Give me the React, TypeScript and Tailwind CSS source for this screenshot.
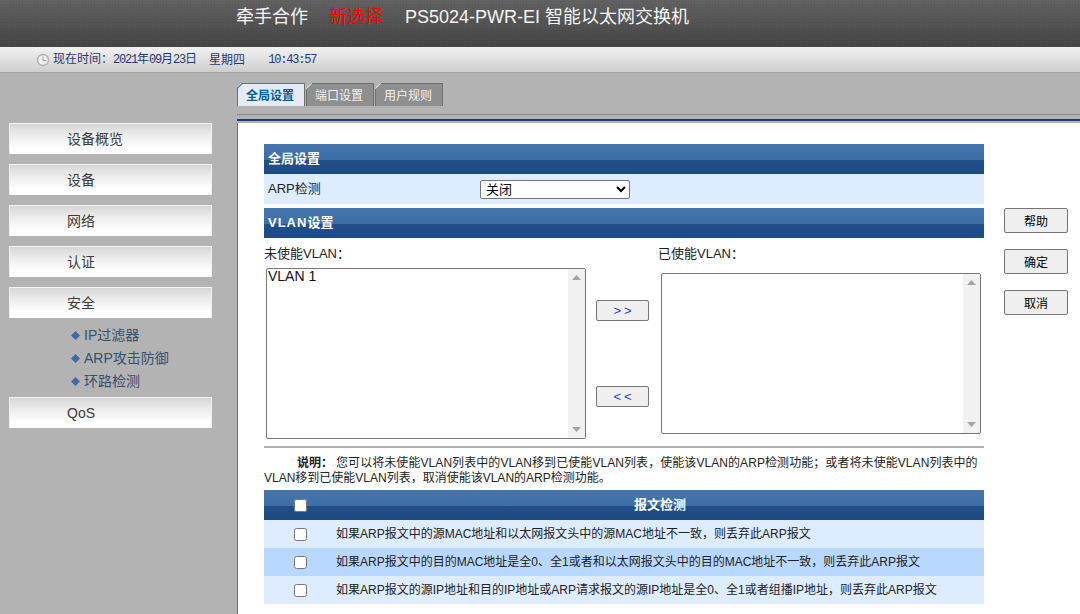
const font = "font-['Liberation_Sans','Noto_Sans_CJK_SC',sans-serif]";

const navItems = ["设备概览", "设备", "网络", "认证", "安全"];
const subItems = ["IP过滤器", "ARP攻击防御", "环路检测"];
const tabs = ["全局设置", "端口设置", "用户规则"];

const rules = [
  "如果ARP报文中的源MAC地址和以太网报文头中的源MAC地址不一致，则丢弃此ARP报文",
  "如果ARP报文中的目的MAC地址是全0、全1或者和以太网报文头中的目的MAC地址不一致，则丢弃此ARP报文",
  "如果ARP报文的源IP地址和目的IP地址或ARP请求报文的源IP地址是全0、全1或者组播IP地址，则丢弃此ARP报文",
];

const barBg = "bg-[linear-gradient(to_bottom,#4576ae_0%,#3d6ea5_52%,#215089_53%,#1d4a83_100%)]";

const NavButton = ({ label }: { label: string }) => (
  <div className="relative h-[31px] w-[203px] border-x border-t border-x-[#efefef] border-t-[#f4f4f4] bg-[linear-gradient(to_bottom,#d6d6d6_0%,#ebebeb_35%,#ffffff_80%)] pl-[57px] text-[14px] leading-[30px] text-[#3a3a3a]">
    {label}
  </div>
);

const ListBox = ({ className, items }: { className: string; items: string[] }) => (
  <div className={`flex rounded-[2px] border border-[#767676] bg-white ${className}`}>
    <div className="flex-1 pl-[1px] text-[14px] leading-[15px] text-[#111]">
      {items.map((item) => (
        <div key={item}>{item}</div>
      ))}
    </div>
    <div className="flex w-[17px] flex-col items-center justify-between bg-[#f1f1f1] py-[6px]">
      <svg width="9" height="5" viewBox="0 0 9 5"><path d="M4.5 0 9 5H0z" fill="#a3a3a3" /></svg>
      <svg width="9" height="5" viewBox="0 0 9 5"><path d="M0 0h9L4.5 5z" fill="#a3a3a3" /></svg>
    </div>
  </div>
);

const SmallButton = ({ label, className }: { label: string; className: string }) => (
  <button className={`rounded-[2px] border border-[#767676] bg-[#efefef] text-center text-[12px] ${className}`}>
    {label}
  </button>
);

// digits in the time bar are narrower than the body font
const Num = ({ children }: { children: string }) => (
  <span className="font-['Liberation_Mono',monospace] text-[12px] tracking-[-1.2px]">{children}</span>
);

export default function App() {
  return (
    <div className={`flex h-[614px] w-[1080px] flex-col overflow-hidden bg-[#b3b3b3] ${font}`}>
      {/* top title */}
      <div className="flex h-[47px] items-start bg-[radial-gradient(rgba(0,0,0,0.07)_1px,transparent_1px),linear-gradient(to_bottom,#626262,#444444)] bg-[size:3px_3px,100%_100%] pl-[236px] pt-[6px] text-[18px] leading-[22px] text-[#f5f5f5]">
        <span>牵手合作</span>
        <span className="ml-[21px] text-[#ff0000]">新选择</span>
        <span className="ml-[22px]">PS5024-PWR-EI 智能以太网交换机</span>
      </div>

      {/* time bar */}
      <div className="flex h-[26px] items-center border-b border-b-[#a6a6a6] bg-[linear-gradient(to_bottom,#f2f2f2,#cecece)] pl-[36px] text-[12px] text-[#1f3a70]">
        <svg width="14" height="14" viewBox="0 0 14 14" className="mr-[3px]" fill="none">
          <circle cx="7" cy="7" r="5.5" fill="#eeeeee" stroke="#b0b0b0" strokeWidth="1.4" />
          <path d="M7 3.5V7.5H10.5" stroke="#a0a0a0" strokeWidth="1" />
        </svg>
        <span>
          现在时间：<Num>2021</Num>年<Num>09</Num>月<Num>23</Num>日
        </span>
        <span className="ml-[12px]">星期四</span>
        <span className="ml-[23px]"><Num>10:43:57</Num></span>
      </div>

      <div className="flex flex-1">
        {/* sidebar */}
        <aside className="w-[237px] shrink-0 pl-[9px] pt-[50px]">
          <div className="flex flex-col gap-[10px]">
            {navItems.map((item) => (
              <NavButton key={item} label={item} />
            ))}
          </div>
          <ul className="flex flex-col pb-[4px] pl-[62px] pt-[6px] text-[14px] leading-[23px] text-[#35506f]">
            {subItems.map((item) => (
              <li key={item} className="flex items-center gap-[4px]">
                <svg width="9" height="9" viewBox="0 0 9 9"><path d="M4.5 0 9 4.5 4.5 9 0 4.5z" fill="#3a6ba6" /></svg>
                {item}
              </li>
            ))}
          </ul>
          <NavButton label="QoS" />
        </aside>

        <main className="flex min-w-0 flex-1 flex-col">
          {/* tabs */}
          <div className="flex h-[33px] gap-[1px] pt-[10px]">
            {tabs.map((tab, i) => (
              <div
                key={tab}
                className={`relative h-[23px] w-[68px] border-x border-t border-[#6f6f6f] pr-[2px] text-center text-[12px] leading-[25px] [clip-path:polygon(5px_0,100%_0,100%_100%,0_100%,0_5px)] ${
                  i === 0 ? "bg-[#e3ebf6] font-bold text-[#0b5a96]" : "bg-[#8f8f8f] text-[#f2f2f2]"
                }`}
              >
                <svg width="6" height="6" viewBox="0 0 6 6" className="absolute left-[-1px] top-[-1px]">
                  <path d="M0 5.5 5.5 0" stroke={i === 0 ? "#6f6f6f" : "#e8e8e8"} strokeWidth="1.4" />
                </svg>
                {tab}
              </div>
            ))}
          </div>
          <div className="h-[8px]" />
          <div className="h-[5px] border-t border-t-[#858585]" />
          <div className="h-[2px] bg-[#1c3a74]" />
          <div className="h-[2px]" />

          {/* content */}
          <div className="flex flex-1 border-l border-l-[#707070] bg-white pl-[26px] pt-[21px]">
            <div className="w-[720px] shrink-0 text-[12px] text-[#222]">
              <div className={`h-[30px] pl-[4px] text-[13px] font-bold leading-[30px] text-white ${barBg}`}>全局设置</div>
              <div className="flex h-[30px] items-center bg-[#ddecff] pl-[4px] text-[13px]">
                <span className="w-[212px]">ARP检测</span>
                <select defaultValue="off" className="h-[19px] w-[150px] rounded-[2px] border border-[#767676] bg-white pl-[1px] text-[13px] text-black">
                  <option value="off">关闭</option>
                  <option value="on">开启</option>
                </select>
              </div>
              <div className={`mt-[4px] h-[30px] pl-[4px] text-[13px] font-bold leading-[30px] text-white ${barBg}`}>
                <span className="tracking-[1px]">VLAN</span>设置
              </div>

              <div className="flex h-[210px] items-start border-b-2 border-b-[#b0b0b0]">
                <div className="w-[332px] shrink-0">
                  <div className="h-[30px] text-[13px] leading-[32px]">未使能VLAN：</div>
                  <ListBox className="ml-[2px] h-[171px] w-[320px]" items={["VLAN 1"]} />
                </div>
                <div className="mt-[62px] flex h-[107px] w-[53px] shrink-0 flex-col justify-between">
                  <SmallButton label=">>" className="h-[21px] w-[53px] pl-[3px] text-[13px] font-light tracking-[3px] text-[#2a3fbf]" />
                  <SmallButton label="<<" className="h-[21px] w-[53px] pl-[3px] text-[13px] font-light tracking-[3px] text-[#2a3fbf]" />
                </div>
                <div className="ml-[9px]">
                  <div className="h-[35px] text-[13px] leading-[32px]">已使能VLAN：</div>
                  <ListBox className="ml-[3px] h-[161px] w-[320px]" items={[]} />
                </div>
              </div>

              <div className="whitespace-nowrap pt-[8px] text-[12px] leading-[15px]">
                <div className="flex">
                  <span className="ml-[33px] w-[39px] font-bold">说明：</span>
                  <span className="tracking-[0.07px]">您可以将未使能VLAN列表中的VLAN移到已使能VLAN列表，使能该VLAN的ARP检测功能；或者将未使能VLAN列表中的</span>
                </div>
                <div>VLAN移到已使能VLAN列表，取消使能该VLAN的ARP检测功能。</div>
              </div>

              <div className={`mt-[4px] flex h-[30px] items-center text-[13px] font-bold text-white ${barBg}`}>
                <div className="flex w-[72px] justify-center">
                  <input type="checkbox" className="m-0 h-[13px] w-[13px]" />
                </div>
                <div className="flex-1 text-center">报文检测</div>
              </div>
              {rules.map((rule, i) => (
                <div key={rule} className={`flex h-[28px] items-center ${i === 1 ? "bg-[#b9d8ff]" : "bg-[#ddecff]"}`}>
                  <div className="flex w-[72px] shrink-0 justify-center">
                    <input type="checkbox" className="m-0 h-[13px] w-[13px]" />
                  </div>
                  <span>{rule}</span>
                </div>
              ))}
            </div>

            {/* side actions */}
            <div className="ml-[20px] flex flex-col gap-[16px] pt-[64px]">
              <SmallButton label="帮助" className="h-[25px] w-[64px] pt-[2px]" />
              <SmallButton label="确定" className="h-[25px] w-[64px] pt-[2px]" />
              <SmallButton label="取消" className="h-[25px] w-[64px] pt-[2px]" />
            </div>
          </div>
        </main>
      </div>
    </div>
  );
}
